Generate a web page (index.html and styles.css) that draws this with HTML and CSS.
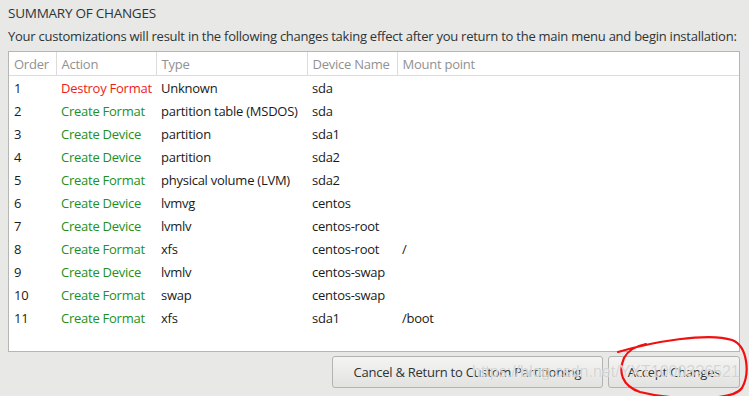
FILE: index.html
```html
<!DOCTYPE html>
<html lang="en">
<head>
  <meta charset="UTF-8">
  <title>Summary of Changes</title>
  <link rel="stylesheet" href="styles.css">
</head>
<body>
  <div class="dialog">
    <h1 class="title">SUMMARY OF CHANGES</h1>
    <p class="intro">Your customizations will result in the following changes taking effect after you return to the main menu and begin installation:</p>

    <div class="table-box">
      <table class="changes">
        <colgroup>
          <col class="c-order">
          <col class="c-action">
          <col class="c-type">
          <col class="c-device">
          <col>
        </colgroup>
        <thead>
          <tr>
            <th>Order</th>
            <th>Action</th>
            <th>Type</th>
            <th>Device Name</th>
            <th>Mount point</th>
          </tr>
        </thead>
        <tbody>
          <tr><td>1</td><td class="destroy">Destroy Format</td><td>Unknown</td><td>sda</td><td></td></tr>
          <tr><td>2</td><td class="create">Create Format</td><td>partition table (MSDOS)</td><td>sda</td><td></td></tr>
          <tr><td>3</td><td class="create">Create Device</td><td>partition</td><td>sda1</td><td></td></tr>
          <tr><td>4</td><td class="create">Create Device</td><td>partition</td><td>sda2</td><td></td></tr>
          <tr><td>5</td><td class="create">Create Format</td><td>physical volume (LVM)</td><td>sda2</td><td></td></tr>
          <tr><td>6</td><td class="create">Create Device</td><td>lvmvg</td><td>centos</td><td></td></tr>
          <tr><td>7</td><td class="create">Create Device</td><td>lvmlv</td><td>centos-root</td><td></td></tr>
          <tr><td>8</td><td class="create">Create Format</td><td>xfs</td><td>centos-root</td><td>/</td></tr>
          <tr><td>9</td><td class="create">Create Device</td><td>lvmlv</td><td>centos-swap</td><td></td></tr>
          <tr><td>10</td><td class="create">Create Format</td><td>swap</td><td>centos-swap</td><td></td></tr>
          <tr><td>11</td><td class="create">Create Format</td><td>xfs</td><td>sda1</td><td>/boot</td></tr>
        </tbody>
      </table>
    </div>

    <div class="actions">
      <button class="btn btn-cancel">Cancel &amp; Return to Custom Partitioning</button>
      <button class="btn btn-accept">Accept Changes</button>
    </div>
  </div>

  <!-- annotation drawn on top of the screenshot -->
  <svg class="scribble" width="140" height="70" viewBox="0 0 140 70">
    <path d="M6 18 C40 8, 96 -2, 120 6 C136 12, 138 40, 130 54 C120 68, 60 66, 28 58 C10 52, 6 38, 12 24 C16 16, 24 12, 34 10"
          fill="none" stroke="#f01010" stroke-width="2.2" stroke-linecap="round"/>
  </svg>
  <div class="watermark">https://blog.csdn.net/YXT10003?6521</div>
</body>
</html>
```

FILE: styles.css
```css
html, body {
  margin: 0;
  padding: 0;
}
body {
  font-family: "Open Sans", "DejaVu Sans", sans-serif;
  font-size: 13px;
  letter-spacing: -0.25px;
  color: #2e3436;
  background: #e8e8e7;
  width: 749px;
  height: 396px;
  overflow: hidden;
  position: relative;
}
.dialog {
  padding: 4px 9px 0 8px;
}
.title {
  margin: 0;
  font-size: 13.5px;
  font-weight: normal;
  line-height: 18px;
  color: #2e3436;
}
.intro {
  margin: 5px 0 0;
  line-height: 18px;
  white-space: nowrap;
}
.table-box {
  margin-top: 6px;
  height: 301px;
  background: #fff;
  border: 1px solid #b6b6b3;
  box-sizing: border-box;
}
.changes {
  width: 100%;
  border-collapse: collapse;
  table-layout: fixed;
}
.c-order { width: 47px; }
.c-action { width: 100px; }
.c-type { width: 151px; }
.c-device { width: 90px; }
.changes th {
  height: 23px;
  padding: 0 5px;
  text-align: left;
  font-weight: normal;
  color: #919191;
  border-bottom: 1px solid #dcdcdc;
  border-left: 1px solid #dcdcdc;
  white-space: nowrap;
}
.changes th:first-child {
  border-left: none;
}
.changes td {
  height: 23px;
  padding: 0 5px;
  color: #1a1a1a;
  white-space: nowrap;
}
.changes td.destroy {
  color: #f01c1c;
}
.changes td.create {
  color: #22901e;
}
.actions {
  display: flex;
  justify-content: flex-end;
  gap: 5px;
  margin-top: 4px;
}
.btn {
  font-family: inherit;
  font-size: 13px;
  letter-spacing: -0.25px;
  color: #2e3436;
  height: 32px;
  padding: 0;
  white-space: nowrap;
  text-align: center;
  border: 1px solid #b3b3b1;
  border-radius: 3px;
  background: linear-gradient(#f4f4f3, #e2e2e0);
}
.btn-cancel {
  width: 271px;
}
.btn-accept {
  width: 132px;
}
.scribble {
  position: absolute;
  left: 612px;
  top: 334px;
}
.watermark {
  position: absolute;
  left: 472px;
  top: 363px;
  font-family: "Liberation Sans", sans-serif;
  font-size: 16px;
  letter-spacing: 0;
  color: rgba(205, 205, 205, 0.85);
  text-shadow: 0 0 1px rgba(255, 255, 255, 0.9);
  white-space: nowrap;
}
```
